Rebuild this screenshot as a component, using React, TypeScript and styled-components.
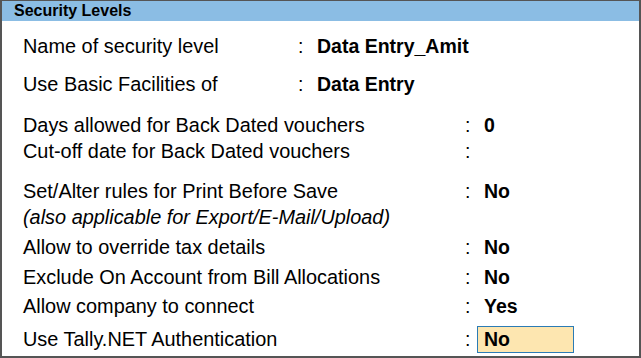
import React from "react";
import styled, { createGlobalStyle } from "styled-components";

type Item = {
  label: string;
  value?: string;
  gap: number;
  wide?: boolean;
  italic?: boolean;
  noColon?: boolean;
  active?: boolean;
};

const data: Item[] = [
  { label: "Name of security level", value: "Data Entry_Amit", gap: 0 },
  { label: "Use Basic Facilities of", value: "Data Entry", gap: 12 },
  { label: "Days allowed for Back Dated vouchers", value: "0", gap: 15, wide: true },
  { label: "Cut-off date for Back Dated vouchers", value: "", gap: 0, wide: true },
  { label: "Set/Alter rules for Print Before Save", value: "No", gap: 14, wide: true },
  { label: "(also applicable for Export/E-Mail/Upload)", gap: 0, wide: true, italic: true, noColon: true },
  { label: "Allow to override tax details", value: "No", gap: 4, wide: true },
  { label: "Exclude On Account from Bill Allocations", value: "No", gap: 4, wide: true },
  { label: "Allow company to connect", value: "Yes", gap: 3, wide: true },
  { label: "Use Tally.NET Authentication", value: "No", gap: 7, wide: true, active: true },
];

function App() {
  return (
    <>
      <GlobalStyle />
      <Panel>
        <Header>Security Levels</Header>
        <Body>
          {data.map((item, index) => {
            return (
              <Row key={index} $gap={item.gap}>
                <Label $wide={item.wide} $italic={item.italic}>
                  {item.label}
                </Label>
                {!item.noColon && <Colon>:</Colon>}
                {!item.noColon && <Value $active={item.active}>{item.value}</Value>}
              </Row>
            );
          })}
        </Body>
      </Panel>
    </>
  );
}

export default App;

const GlobalStyle = createGlobalStyle`
  html, body {
    margin: 0;
    padding: 0;
    background: #ffffff;
  }
  body {
    font-family: "Liberation Sans", Arial, sans-serif;
    color: #000000;
  }
`;

const Panel = styled.div`
  width: 641px;
  height: 358px;
  box-sizing: border-box;
  border-top: 1px solid #555555;
  border-left: 2px solid #555555;
  border-right: 2px solid #555555;
  border-bottom: 2px solid #555555;
  background: #ffffff;
  display: flex;
  flex-direction: column;
`;

const Header = styled.div`
  height: 20px;
  background: #8bbde4;
  font-weight: 700;
  font-size: 16px;
  line-height: 20px;
  padding-left: 12px;
  color: #000000;
`;

const Body = styled.div`
  padding: 12px 0 0 21px;
  display: flex;
  flex-direction: column;
`;

const Row = styled.div<{ $gap: number }>`
  display: flex;
  align-items: center;
  height: 26px;
  margin-top: ${(p) => p.$gap}px;
  font-size: 19.5px;
  white-space: nowrap;
`;

const Label = styled.div<{ $wide?: boolean; $italic?: boolean }>`
  width: ${(p) => (p.$wide ? 442 : 275)}px;
  font-size: 19.9px;
  font-style: ${(p) => (p.$italic ? "italic" : "normal")};
`;

const Colon = styled.div`
  width: 12px;
`;

const Value = styled.div<{ $active?: boolean }>`
  font-weight: 700;
  box-sizing: border-box;
  padding: 0 6px;
  height: 27px;
  line-height: 25px;
  width: ${(p) => (p.$active ? "97px" : "auto")};
  border: 1px solid ${(p) => (p.$active ? "#2b7bb5" : "transparent")};
  background: ${(p) => (p.$active ? "#fde6b0" : "transparent")};
`;
